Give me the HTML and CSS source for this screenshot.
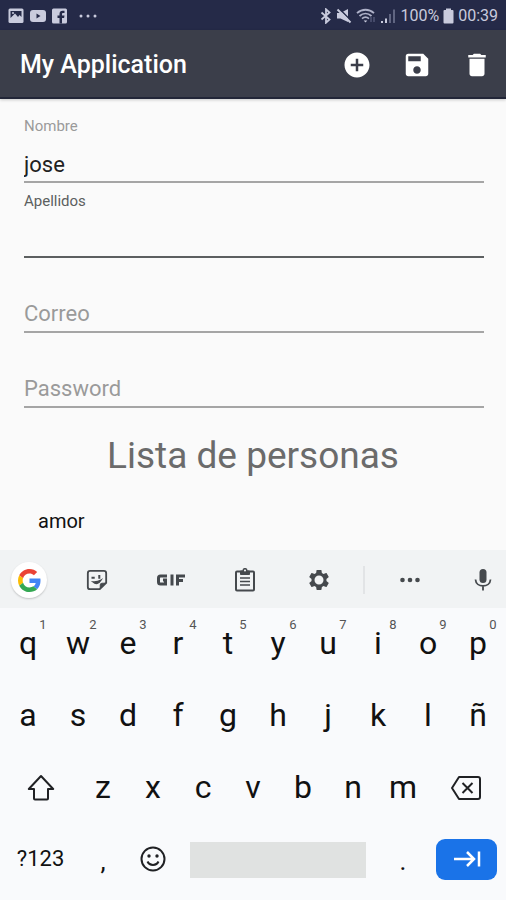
FILE: index.html
```
<!DOCTYPE html>
<html lang="es">
<head>
<meta charset="utf-8">
<meta name="viewport" content="width=device-width, initial-scale=1">
<title>My Application</title>
<link rel="stylesheet" href="styles.css">
</head>
<body>
<div class="status">
  <div class="status-group status-left">
    <svg width="16" height="16" viewBox="0 0 16 16"><rect x=".5" y=".5" width="15" height="14.5" rx="1.5" fill="#c9cbdd"/><path d="M2.5 3h11v6l-2-2-1.5 2-3-3.5L2.500 10z" fill="#252a48"/><circle cx="5" cy="5" r="1" fill="#c9cbdd"/></svg>
    <svg width="16" height="16" viewBox="0 0 16 16"><rect y="2" width="16" height="12" rx="3" fill="#c9cbdd"/><path d="M6.500 5.500v5l4-2.500z" fill="#252a48"/></svg>
    <svg width="15" height="16" viewBox="0 0 15 16"><rect y=".5" width="15" height="15" rx="1.500" fill="#c9cbdd"/><path d="M7.500 15.500V10H5.500V7.500h2V6c0-2.200 1.200-3.200 3-3.200h2V5h-1.300c-.9 0-1.200.4-1.200 1.200v1.300h2.500l-.4 2.500H10v5.500z" fill="#252a48"/></svg>
    <svg class="status-more" width="18" height="16" viewBox="0 0 18 16" fill="#c9cbdd"><circle cx="2" cy="8" r="1.500"/><circle cx="9" cy="8" r="1.500"/><circle cx="16" cy="8" r="1.500"/></svg>
  </div>
  <div class="status-group status-right">
    <svg width="12" height="16" viewBox="0 0 12 16" fill="none" stroke="#c9cbdd" stroke-width="1.800"><path d="M1.500 4.500l8 7L6 14.700V1.300l3.500 3.200-8 7"/></svg>
    <svg width="16" height="16" viewBox="0 0 16 16"><path d="M1 5h3.500L12 1v13l-7.500-3.500H1z" fill="#c9cbdd"/><path d="M3 .5l13 13" stroke="#252a48" stroke-width="1.500"/><path d="M1.500 1.500l13 13" stroke="#c9cbdd" stroke-width="2"/></svg>
    <svg width="20" height="16" viewBox="0 0 20 16" fill="none" stroke="#aeb1c8" stroke-width="1.800"><path d="M1 5.200c5-4.600 12-4.600 17 0M3.500 8c3.600-3.300 8.400-3.300 12 0M6 10.700c2.200-2 4.800-2 7 0"/><path d="M7.700 12.500h3.600l-1.800 2z" fill="#c9cbdd" stroke="none"/><path d="M15 9v5M18 9v5" stroke="#666b8b" stroke-width="1"/></svg>
    <svg width="16" height="16" viewBox="0 0 16 16"><path d="M1 13h2v2H1zM5 10.500h2V15H5z" fill="#c9cbdd"/><path d="M9 6h2v9H9zM13 1.500h2V15h-2z" fill="#606581"/></svg>
    <span>100%</span>
    <svg width="11" height="16" viewBox="0 0 11 16"><path d="M3 .5h5V2h1.500q1 0 1 1v11.500q0 1-1 1h-8q-1 0-1-1V3q0-1 1-1H3z" fill="#c9cbdd"/></svg>
    <span>00:39</span>
  </div>
</div>

<header class="appbar">
  <h1>My Application</h1>
  <button class="action" aria-label="Agregar"><svg width="30" height="30" viewBox="0 0 24 24"><path fill="#fff" d="M12 2C6.480 2 2 6.480 2 12s4.480 10 10 10 10-4.480 10-10S17.520 2 12 2zm5 11h-4v4h-2v-4H7v-2h4V7h2v4h4v2z"/></svg></button>
  <button class="action" aria-label="Guardar"><svg width="30" height="30" viewBox="0 0 24 24"><path fill="#fff" d="M17 3H5a2 2 0 0 0-2 2v14c0 1.100.890 2 2 2h14c1.100 0 2-.9 2-2V7l-4-4zm-5 16c-1.660 0-3-1.340-3-3s1.340-3 3-3 3 1.340 3 3-1.340 3-3 3zm3-10H5V5h10v4z"/></svg></button>
  <button class="action" aria-label="Eliminar"><svg width="30" height="30" viewBox="0 0 24 24"><path fill="#fff" d="M6 19c0 1.100.9 2 2 2h8c1.100 0 2-.9 2-2V7H6v12zM19 4h-3.500l-1-1h-5l-1 1H5v2h14V4z"/></svg></button>
</header>

<main>
  <form class="form">
    <div class="field"><label for="nombre">Nombre</label><input id="nombre" type="text" value="jose"></div>
    <div class="field field-active"><label for="apellidos">Apellidos</label><input id="apellidos" type="text"></div>
    <div class="field field-empty"><label for="correo">Correo</label><input id="correo" type="email"></div>
    <div class="field field-empty"><label for="password">Password</label><input id="password" type="password"></div>
  </form>
  <h2>Lista de personas</h2>
  <ul class="people"><li>amor</li></ul>
</main>

<section class="keyboard" aria-label="Teclado">
  <div class="tools">
    <button class="tool-first" aria-label="Google"><span class="google"><svg width="23" height="23" viewBox="0 0 48 48"><path fill="#EA4335" d="M24 9.500c3.540 0 6.710 1.220 9.210 3.600l6.850-6.850C35.900 2.380 30.470 0 24 0 14.620 0 6.510 5.380 2.560 13.220l7.980 6.190C12.430 13.720 17.740 9.500 24 9.500z"/><path fill="#4285F4" d="M46.980 24.550c0-1.570-.15-3.090-.38-4.550H24v9.020h12.940c-.58 2.960-2.260 5.480-4.780 7.180l7.730 6c4.510-4.180 7.090-10.360 7.090-17.650z"/><path fill="#FBBC05" d="M10.530 28.590c-.48-1.450-.76-2.990-.76-4.590s.27-3.140.76-4.590l-7.980-6.190C.92 16.460 0 20.120 0 24s.92 7.540 2.560 10.780l7.970-6.190z"/><path fill="#34A853" d="M24 48c6.480 0 11.930-2.130 15.890-5.810l-7.730-6c-2.150 1.450-4.920 2.300-8.160 2.300-6.260 0-11.570-4.220-13.470-9.910l-7.980 6.190C6.510 42.620 14.620 48 24 48z"/></svg></span></button>
    <button aria-label="Stickers"><svg width="22" height="22" viewBox="0 0 24 24" fill="none" stroke="#45494d" stroke-width="2"><path d="M4.500 2h15q2.500 0 2.500 2.500V15l-7 7H4.500Q2 22 2 19.500v-15Q2 2 4.500 2z"/><path d="M15.500 21.500V17.500q0-2 2-2h4z" fill="#45494d" stroke-width="1"/><path d="M7.500 14q5 4.500 9-2-4.500 2.500-9 2z" fill="#45494d" stroke-width="1.500"/><path d="M6 9.500h3.500M14.500 6.500v4" stroke-width="2.200"/></svg></button>
    <button aria-label="GIF"><svg width="30" height="14" viewBox="0 0 30 14" fill="none" stroke="#45494d" stroke-width="3"><path d="M11 3H4.500Q2.500 3 2.500 5v4q0 2 2 2h5V7H7M16 1.500v11M21.500 12.500V3H29M21.500 7.500H27"/></svg></button>
    <button aria-label="Portapapeles"><svg width="24" height="24" viewBox="0 0 24 24" fill="none" stroke="#45494d"><path d="M4 3.500h16q1 0 1 1v17q0 1-1 1H4q-1 0-1-1v-17q0-1 1-1z" stroke-width="2"/><path d="M7.500 3h9v3.500h-9z" fill="#45494d"/><circle cx="12" cy="2.500" r="1.800" fill="#f1f3f4" stroke-width="1.500"/><path d="M7 10h10M7 13.500h10M7 17h10" stroke-width="1.500"/></svg></button>
    <button aria-label="Ajustes"><svg width="22" height="22" viewBox="1 1 22 22"><path fill="#45494d" fill-rule="evenodd" d="M19.430 12.980c.04-.32.07-.64.07-.98s-.03-.66-.07-.98l2.110-1.650c.19-.15.24-.42.12-.64l-2-3.460c-.12-.22-.39-.3-.61-.22l-2.490 1c-.52-.4-1.080-.73-1.690-.98l-.38-2.650C14.460 2.180 14.250 2 14 2h-4c-.25 0-.46.18-.49.42l-.38 2.650c-.61.25-1.170.59-1.690.98l-2.490-1c-.23-.09-.49 0-.61.22l-2 3.460c-.13.22-.07.49.12.64l2.110 1.650c-.04.32-.07.65-.07.98s.03.66.07.98l-2.110 1.650c-.19.15-.24.42-.12.64l2 3.460c.12.22.39.3.61.22l2.490-1c.52.4 1.080.73 1.690.98l.38 2.650c.03.24.24.42.49.42h4c.25 0 .46-.18.49-.42l.38-2.650c.61-.25 1.170-.59 1.690-.98l2.490 1c.23.09.49 0 .61-.22l2-3.460c.12-.22.07-.49-.12-.64zM12 16.500a4.500 4.500 0 1 1 0-9 4.500 4.500 0 0 1 0 9z"/></svg></button>
    <span class="divider"></span>
    <button aria-label="Más"><svg width="22" height="24" viewBox="0 0 22 24" fill="#45494d"><circle cx="3.500" cy="12" r="2.300"/><circle cx="11" cy="12" r="2.300"/><circle cx="18.500" cy="12" r="2.300"/></svg></button>
    <button class="tool-last" aria-label="Voz"><svg width="24" height="24" viewBox="0 0 24 24"><rect x="8.500" y="1" width="7" height="14" rx="3.500" fill="#45494d"/><path d="M4.500 11.500c.5 8.500 14.500 8.500 15 0M12 17.500V22.500" fill="none" stroke="#45494d" stroke-width="1.800"/></svg></button>
  </div>
  <div class="keys">
    <button>q<sup>1</sup></button><button>w<sup>2</sup></button><button>e<sup>3</sup></button><button>r<sup>4</sup></button><button>t<sup>5</sup></button><button>y<sup>6</sup></button><button>u<sup>7</sup></button><button>i<sup>8</sup></button><button>o<sup>9</sup></button><button>p<sup>0</sup></button>
    <button>a</button><button>s</button><button>d</button><button>f</button><button>g</button><button>h</button><button>j</button><button>k</button><button>l</button><button>ñ</button>
    <button class="wide" aria-label="Mayúsculas"><svg width="30" height="30" viewBox="0 0 30 30" fill="none" stroke="#202124" stroke-width="2"><path d="M15 4L2.800 17H8v9.500q0 1 1 1h12q1 0 1-1V17h5.200z" stroke-linejoin="round"/></svg></button><button>z</button><button>x</button><button>c</button><button>v</button><button>b</button><button>n</button><button>m</button><button class="wide" aria-label="Borrar"><svg width="32" height="26" viewBox="0 0 32 26" fill="none" stroke="#202124" stroke-width="2"><path d="M9 3h19q2 0 2 2v18q0 2-2 2H9L2 14z" stroke-linejoin="round"/><path d="M12.500 9l10 10M22.500 9l-10 10"/></svg></button>
    <button class="wide symbols">?123</button><button class="punct">,</button><button aria-label="Emoji"><svg width="26" height="26" viewBox="0 0 26 26" fill="none" stroke="#202124" stroke-width="2"><circle cx="13" cy="13" r="11.500"/><path d="M7.500 15.500c2 4.500 9 4.500 11 0"/><circle cx="9" cy="10" r="1.700" fill="#202124" stroke="none"/><circle cx="17" cy="10" r="1.700" fill="#202124" stroke="none"/></svg></button><button class="space" aria-label="Espacio"><span></span></button><button class="punct">.</button><button class="wide next" aria-label="Siguiente"><span><svg width="28" height="18" viewBox="0 0 28 18" fill="none" stroke="#fff" stroke-width="2.500"><path d="M1 9h20M14 2l7 7-7 7M26 1.500v15"/></svg></span></button>
  </div>
</section>
</body>
</html>
```
FILE: styles.css
```
* { box-sizing: border-box; }

body {
  margin: 0;
  min-height: 100vh;
  display: flex;
  flex-direction: column;
  background: #fafafa;
  color: #212121;
  font-family: Roboto, "Liberation Sans", sans-serif;
}

button {
  border: 0;
  padding: 0;
  background: none;
  color: inherit;
  font: inherit;
}

svg { display: block; flex: none; }

.status {
  display: flex;
  justify-content: space-between;
  align-items: center;
  height: 30px;
  padding: 1px 8px 0;
  background: #252a48;
  color: #c9cbdd;
  font-size: 16px;
}

.status-group { display: flex; align-items: center; }
.status-left { gap: 6px; }
.status-right { gap: 4px; }
.status-more { margin-left: 6px; }

.appbar {
  display: flex;
  align-items: center;
  gap: 30px;
  height: 69px;
  padding: 2px 14px 0 20px;
  background: #3b3e4a;
  border-bottom: 2px solid #222638;
  box-shadow: 0 1px 3px #0003;
}

.appbar h1 {
  flex: 1;
  margin: 0;
  color: #fff;
  font-size: 25px;
  font-weight: 500;
}

main { flex: 1; }

.form { padding: 9px 22px 0 24px; }

.field {
  display: grid;
  grid-template-rows: 28px 47px;
}

.field label {
  grid-area: 1 / 1;
  padding-top: 8px;
  color: #9a9a9a;
  font-size: 15px;
  line-height: 20px;
}

.field input {
  grid-area: 2 / 1;
  width: 100%;
  border: 0;
  border-bottom: 2px solid #a5a5a5;
  padding: 12px 0 0;
  background: none;
  color: #212121;
  font: inherit;
  font-size: 22px;
  outline: 0;
}

.field-active label { color: #5c5f60; }
.field-active input { border-bottom-color: #5c5f60; }

.field-empty label {
  grid-area: 2 / 1;
  padding-top: 18px;
  font-size: 22px;
}

h2 {
  margin: 24px 0 0;
  color: #6b6b6b;
  font-size: 37px;
  font-weight: 400;
  line-height: 48px;
  text-align: center;
}

.people {
  margin: 0;
  padding: 24px 38px 12px;
  list-style: none;
  color: #111;
  font-size: 20px;
  line-height: 34px;
}

.keyboard { background: #f9fafc; }

.tools {
  display: grid;
  grid-template-columns: 60fr 74fr 73fr 75fr 74fr 16fr 76fr 58fr;
  align-items: center;
  height: 58px;
  padding-top: 2px;
  background: #f1f3f4;
}

.tools button { display: flex; justify-content: center; }
.tools .tool-first { justify-content: flex-start; padding-left: 11px; }
.tools .tool-last { justify-content: flex-end; padding-right: 11px; }

.google {
  display: flex;
  align-items: center;
  justify-content: center;
  width: 36px;
  height: 36px;
  border-radius: 50%;
  background: #fff;
  box-shadow: 0 1px 2px #0003;
}

.divider {
  justify-self: center;
  width: 2px;
  height: 28px;
  background: #e2e4e6;
}

.keys {
  display: grid;
  grid-template-columns: repeat(20, 1fr);
  grid-auto-rows: 72px;
  padding: 0 3px 4px;
  color: #111;
}

.keys button {
  grid-column: span 2;
  position: relative;
  display: flex;
  align-items: center;
  justify-content: center;
  padding-bottom: 2px;
  font-size: 32px;
  line-height: 40px;
}

.keys .wide { grid-column: span 3; }
.keys .symbols { font-size: 22px; }
.keys .punct { padding-top: 4px; font-size: 26px; }

.keys sup {
  position: absolute;
  top: 8px;
  left: 50%;
  width: 30px;
  color: #555;
  font-size: 13px;
  line-height: 18px;
}

.keys .space { grid-column: span 8; padding: 0 12px; }

.space span { flex: 1; height: 36px; background: #e0e2e1; }

.keys .next { padding: 0 6px 2px 8px; }

.keys .next span {
  flex: 1;
  display: flex;
  align-items: center;
  justify-content: center;
  height: 41px;
  border-radius: 9px;
  background: #1a73e8;
}
```
